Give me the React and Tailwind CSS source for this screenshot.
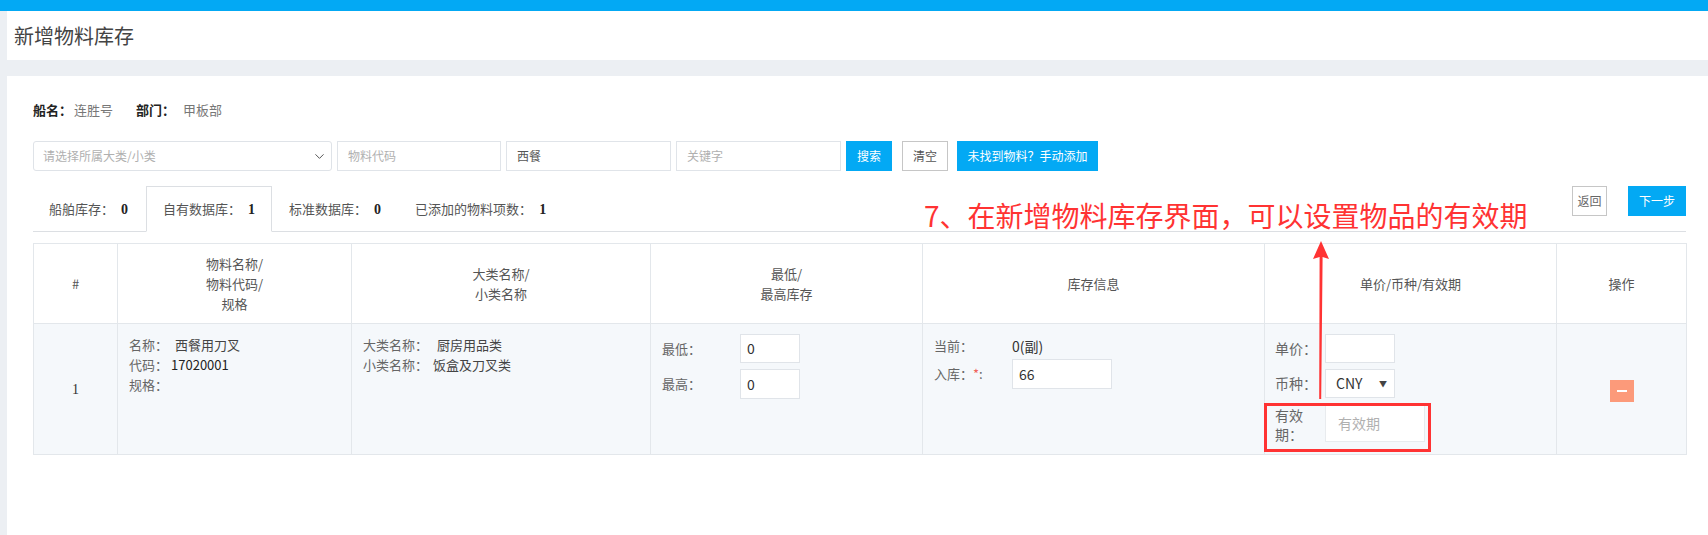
import React from 'react';
import { ChevronDown } from 'lucide-react';

const line = 'border border-[#e3e7eb]';

function TextBox({ w, h = 30, value, placeholder, className = '' }) {
    return (
        <div
            className={`flex items-center bg-white border border-[#e0e4e9] text-[12px] ${className}`}
            style={{ width: w, height: h }}
        >
            {value ? <span className="text-[#555]">{value}</span> : <span className="text-[#b0b0b0]">{placeholder}</span>}
        </div>
    );
}

function Tab({ label, count, active, className = '' }) {
    return (
        <div
            className={`-mb-px h-[46px] flex items-center px-[16px] border ${active ? 'border-[#dcdfe3] border-b-white bg-white' : 'border-transparent'} ${className}`}
        >
            <span className="text-[#555]">{label}：</span>
            <b className="ml-[7px] font-['Liberation_Serif',serif] text-[14px] text-[#222]">{count}</b>
        </div>
    );
}

function HeaderCell({ children }) {
    return (
        <th className={`${line} font-normal text-[13px] leading-[20px] text-[#555] text-center align-middle`}>
            {children}
        </th>
    );
}

export default function App() {
    return (
        <div className="min-h-[535px] bg-[#eceff3] font-['Noto_Sans_CJK_SC',sans-serif] text-[13px] text-[#555]">
            <div className="h-[11px] bg-[#03a9f4]" />
            <div className="ml-[7px] h-[49px] bg-white flex items-center pl-[7px] text-[20px] text-[#444]">
                新增物料库存
            </div>
            <div className="h-[16px]" />

            <div className="relative ml-[7px] h-[459px] bg-white pt-[24px] pl-[26px] pr-[22px]">
                {/* ship info */}
                <div className="h-[20px] flex items-center leading-[20px]">
                    <b className="text-[#222]">船名：</b>
                    <span className="ml-[2px] text-[#777]">连胜号</span>
                    <b className="ml-[23px] text-[#222]">部门：</b>
                    <span className="ml-[8px] text-[#777]">甲板部</span>
                </div>

                {/* search bar */}
                <div className="mt-[21px] flex items-center gap-[5px] h-[30px]">
                    <div className="w-[299px] h-[30px] flex items-center justify-between pl-[9px] pr-[4px] border border-[#dfe3e8] rounded-[3px] text-[12px] text-[#b0b0b0]">
                        <span>请选择所属大类/小类</span>
                        <ChevronDown size={15} strokeWidth={1.6} className="text-[#555]" />
                    </div>
                    <TextBox w={164} placeholder="物料代码" className="pl-[10px]" />
                    <TextBox w={165} value="西餐" className="pl-[10px]" />
                    <TextBox w={165} placeholder="关键字" className="pl-[10px]" />
                    <button className="w-[46px] h-[30px] bg-[#03a9f4] text-white text-[12px]">搜索</button>
                    <button className="ml-[5px] w-[46px] h-[30px] border border-[#c6c6c6] bg-white text-[#555] text-[12px]">清空</button>
                    <button className="ml-[4px] w-[141px] h-[30px] bg-[#03a9f4] text-white text-[12px]">未找到物料？手动添加</button>
                </div>

                {/* tabs */}
                <div className="mt-[15px] flex border-b border-[#dcdfe3]">
                    <Tab label="船舶库存" count="0" className="pl-[15px] pr-[17px]" />
                    <Tab label="自有数据库" count="1" active />
                    <Tab label="标准数据库" count="0" />
                    <Tab label="已添加的物料项数" count="1" />
                    <div className="ml-auto flex gap-[21px] self-start">
                        <button className="w-[35px] h-[30px] border border-[#c6c6c6] bg-white text-[12px] text-[#666]">返回</button>
                        <button className="w-[58px] h-[30px] bg-[#03a9f4] text-[12px] text-white">下一步</button>
                    </div>
                </div>

                {/* table */}
                <table className={`mt-[11px] w-full table-fixed border-collapse ${line}`}>
                    <colgroup>
                        <col className="w-[84px]" />
                        <col className="w-[234px]" />
                        <col className="w-[299px]" />
                        <col className="w-[272px]" />
                        <col className="w-[342px]" />
                        <col className="w-[292px]" />
                        <col className="w-[130px]" />
                    </colgroup>
                    <thead>
                        <tr className="h-[80px] bg-white">
                            <HeaderCell>#</HeaderCell>
                            <HeaderCell>物料名称/<br />物料代码/<br />规格</HeaderCell>
                            <HeaderCell>大类名称/<br />小类名称</HeaderCell>
                            <HeaderCell>最低/<br />最高库存</HeaderCell>
                            <HeaderCell>库存信息</HeaderCell>
                            <HeaderCell>单价/币种/有效期</HeaderCell>
                            <HeaderCell>操作</HeaderCell>
                        </tr>
                    </thead>
                    <tbody>
                        <tr className="h-[131px] bg-[#f5f8fb]">
                            <td className={`${line} text-center align-middle font-['Liberation_Serif',serif] text-[14px] text-[#333]`}>1</td>
                            <td className={`${line} align-top pl-[11px] pt-[11px] leading-[20px]`}>
                                <div><span className="text-[#666]">名称：</span><span className="ml-[7px] text-[#444]">西餐用刀叉</span></div>
                                <div><span className="text-[#666]">代码：</span><span className="ml-[3px] text-[#222]">17020001</span></div>
                                <div className="text-[#666]">规格：</div>
                            </td>
                            <td className={`${line} align-top pl-[11px] pt-[11px] leading-[20px]`}>
                                <div><span className="text-[#666]">大类名称：</span><span className="ml-[9px] text-[#444]">厨房用品类</span></div>
                                <div><span className="text-[#666]">小类名称：</span><span className="ml-[5px] text-[#444]">饭盒及刀叉类</span></div>
                            </td>
                            <td className={`${line} align-top pl-[11px] pt-[10px]`}>
                                <div className="flex items-center">
                                    <span className="w-[78px] text-[#666]">最低：</span>
                                    <div className="w-[60px] h-[29px] bg-white border border-[#e0e4e9] flex items-center pl-[6px] text-[14px] text-[#333]">0</div>
                                </div>
                                <div className="mt-[6px] flex items-center">
                                    <span className="w-[78px] text-[#666]">最高：</span>
                                    <div className="w-[60px] h-[30px] bg-white border border-[#e0e4e9] flex items-center pl-[6px] text-[14px] text-[#333]">0</div>
                                </div>
                            </td>
                            <td className={`${line} align-top pl-[11px] pt-[12px]`}>
                                <div className="h-[20px] flex items-center">
                                    <span className="w-[78px] text-[#666]">当前：</span>
                                    <span className="text-[14px] text-[#333]">0(副)</span>
                                </div>
                                <div className="mt-[3px] flex items-center">
                                    <span className="w-[78px] text-[#666]">入库：<span className="text-[#f0625a]">*</span>:</span>
                                    <div className="w-[100px] h-[30px] bg-white border border-[#e0e4e9] flex items-center pl-[6px] text-[14px] text-[#333]">66</div>
                                </div>
                            </td>
                            <td className={`${line} align-top pl-[10px] pt-[10px]`}>
                                <div className="flex items-center">
                                    <span className="w-[50px] text-[14px] text-[#666]">单价：</span>
                                    <div className="w-[70px] h-[29px] bg-white border border-[#e0e4e9]" />
                                </div>
                                <div className="mt-[6px] flex items-center">
                                    <span className="w-[50px] text-[14px] text-[#666]">币种：</span>
                                    <div className="w-[70px] h-[29px] bg-white border border-[#e0e4e9] flex items-center justify-between pl-[10px] pr-[7px] text-[14px] text-[#333]">
                                        <span>CNY</span>
                                        <span className="text-[8px] text-[#444]">▼</span>
                                    </div>
                                </div>
                                <div className="mt-[7px] flex items-start">
                                    <span className="w-[50px] text-[14px] leading-[19px] text-[#666] pt-[1px]">有效<br />期：</span>
                                    <div className="w-[100px] h-[37px] bg-white border border-[#e8ebee] flex items-center pl-[12px] text-[14px] text-[#b0b0b0]">有效期</div>
                                </div>
                            </td>
                            <td className={`${line} text-center align-middle`}>
                                <button className="inline-flex items-center justify-center w-[24px] h-[22px] bg-[#fc9a7a]">
                                    <span className="block w-[10px] h-[2px] bg-white" />
                                </button>
                            </td>
                        </tr>
                    </tbody>
                </table>

                {/* annotation */}
                <div className="absolute left-[917px] top-[125px] whitespace-nowrap text-[28px] leading-[28px] text-[#ff3333]">
                    7、在新增物料库存界面，可以设置物品的有效期
                </div>
                <svg className="absolute left-[1300px] top-[160px]" width="30" height="170" viewBox="0 0 30 170">
                    <polygon points="14,5 22,23 15.6,21 14.2,163 12.2,163 12.6,21 6,23" fill="#ff3333" />
                </svg>
                <div className="absolute left-[1257px] top-[327px] w-[167px] h-[49px] border-[3px] border-[#ff3333]" />
            </div>
        </div>
    );
}
